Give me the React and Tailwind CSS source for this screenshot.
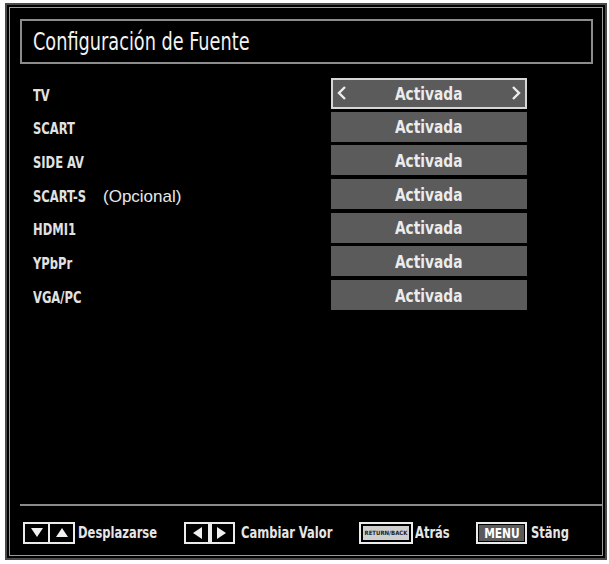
const FONT = { fontFamily: '"Liberation Sans Narrow", "DejaVu Sans Condensed", "Liberation Sans", sans-serif' };

const sources = [
  { name: "TV", active: true },
  { name: "SCART" },
  { name: "SIDE AV" },
  { name: "SCART-S", note: "(Opcional)" },
  { name: "HDMI1" },
  { name: "YPbPr" },
  { name: "VGA/PC" },
];

function Chevron({ dir }) {
  return (
    <svg width="10" height="16" viewBox="0 0 10 16" className="shrink-0">
      <path
        d={dir === "left" ? "M8 2 L2 8 L8 14" : "M2 2 L8 8 L2 14"}
        fill="none"
        stroke="#ececec"
        strokeWidth="2.4"
      />
    </svg>
  );
}

function ValueBox({ active }) {
  const text = (
    <span className="inline-block origin-center scale-x-[0.85] text-[18px] font-bold text-[#ececec]" style={FONT}>
      Activada
    </span>
  );
  if (active) {
    return (
      <div className="flex h-[31px] w-[196px] items-center justify-between border-2 border-[#d6d6d6] bg-[#5b5b5b] px-[4px]">
        <Chevron dir="left" />
        {text}
        <Chevron dir="right" />
      </div>
    );
  }
  return <div className="flex h-[30px] w-[196px] items-center justify-center bg-[#5b5b5b]">{text}</div>;
}

function Tri({ dir }) {
  const d = {
    down: "M1 2 L13 2 L7 11 Z",
    up: "M1 11 L13 11 L7 2 Z",
    left: "M11 1 L11 13 L2 7 Z",
    right: "M2 1 L2 13 L11 7 Z",
  }[dir];
  return (
    <svg width="14" height="14" viewBox="0 0 14 14">
      <path d={d} fill="#f0f0f0" />
    </svg>
  );
}

function Label({ width, ml, children }) {
  return (
    <div className="shrink-0" style={{ width, marginLeft: ml }}>
      <span className="inline-block origin-left scale-x-[0.8] whitespace-nowrap">{children}</span>
    </div>
  );
}

export default function App() {
  return (
    <div className="h-[564px] w-[609px] bg-white pl-[5px] pt-[3px]">
      <div className="h-[557px] w-[602px] border-2 border-[#4a4a4a] bg-black p-[2px]">
        <div className="flex h-full flex-col border border-[#9a9a9a] pl-[10px] pr-[9px] pt-[11px]">
          <div className="flex h-[45px] items-center border-2 border-[#8c8c8c] pl-[11px]">
            <span
              className="inline-block origin-left scale-x-[0.82] whitespace-nowrap text-[24px] font-medium leading-none text-[#f2f2f2]"
              style={FONT}
            >
              Configuración de Fuente
            </span>
          </div>

          <div className="mt-[14px] flex flex-col gap-[3.7px]">
            {sources.map((s) => (
              <div key={s.name} className="flex h-[30px] items-center">
                <div className="mt-[5px] flex w-[311px] items-center pl-[13px]">
                  <div className="w-[70px] text-[16px] font-bold text-[#e2e2e2]" style={FONT}>
                    <span className="inline-block origin-left scale-x-[0.8] whitespace-nowrap">{s.name}</span>
                  </div>
                  {s.note && (
                    <span
                      className="text-[17px] text-[#e8e8e8]"
                      style={{ fontFamily: '"Liberation Sans", Arial, sans-serif' }}
                    >
                      {s.note}
                    </span>
                  )}
                </div>
                <ValueBox active={s.active} />
              </div>
            ))}
          </div>

          <div className="mt-auto -mr-[9px] h-[2px] bg-[#8a8a8a]" />

          <div className="flex h-[49px] items-center pl-[3px] pt-[5px] text-[16px] font-bold text-[#e6e6e6]" style={FONT}>
            <div className="flex h-[22px] w-[52px] shrink-0 border-2 border-[#ececec]">
              <div className="flex flex-1 items-center justify-center">
                <Tri dir="down" />
              </div>
              <div className="w-[2px] bg-[#ececec]" />
              <div className="flex flex-1 items-center justify-center">
                <Tri dir="up" />
              </div>
            </div>
            <Label width={80} ml={3}>Desplazarse</Label>

            <div className="ml-[26px] flex h-[22px] w-[51px] shrink-0 items-center justify-center border-2 border-[#ececec]">
              <Tri dir="left" />
              <div className="mx-[3px] h-full w-[4px] bg-[#ececec]" />
              <Tri dir="right" />
            </div>
            <Label width={92} ml={6}>Cambiar Valor</Label>

            <div className="ml-[26px] flex h-[22px] w-[54px] shrink-0 items-center border-2 border-[#ececec] p-[2px]">
              <div className="flex h-full w-full items-center justify-center bg-[#cfcfcf] text-[6px] font-bold leading-none text-[#222]">
                RETURN/BACK
              </div>
            </div>
            <Label width={35} ml={2}>Atrás</Label>

            <div className="ml-[26px] flex h-[22px] w-[51px] shrink-0 items-center border-2 border-[#ececec] p-[1px]">
              <div className="flex h-full w-full items-center justify-center bg-[#5a5a5a] text-[14px] font-bold leading-none text-white">
                <span className="inline-block scale-x-[0.85]">MENU</span>
              </div>
            </div>
            <Label width={40} ml={4}>Stäng</Label>
          </div>
        </div>
      </div>
    </div>
  );
}
